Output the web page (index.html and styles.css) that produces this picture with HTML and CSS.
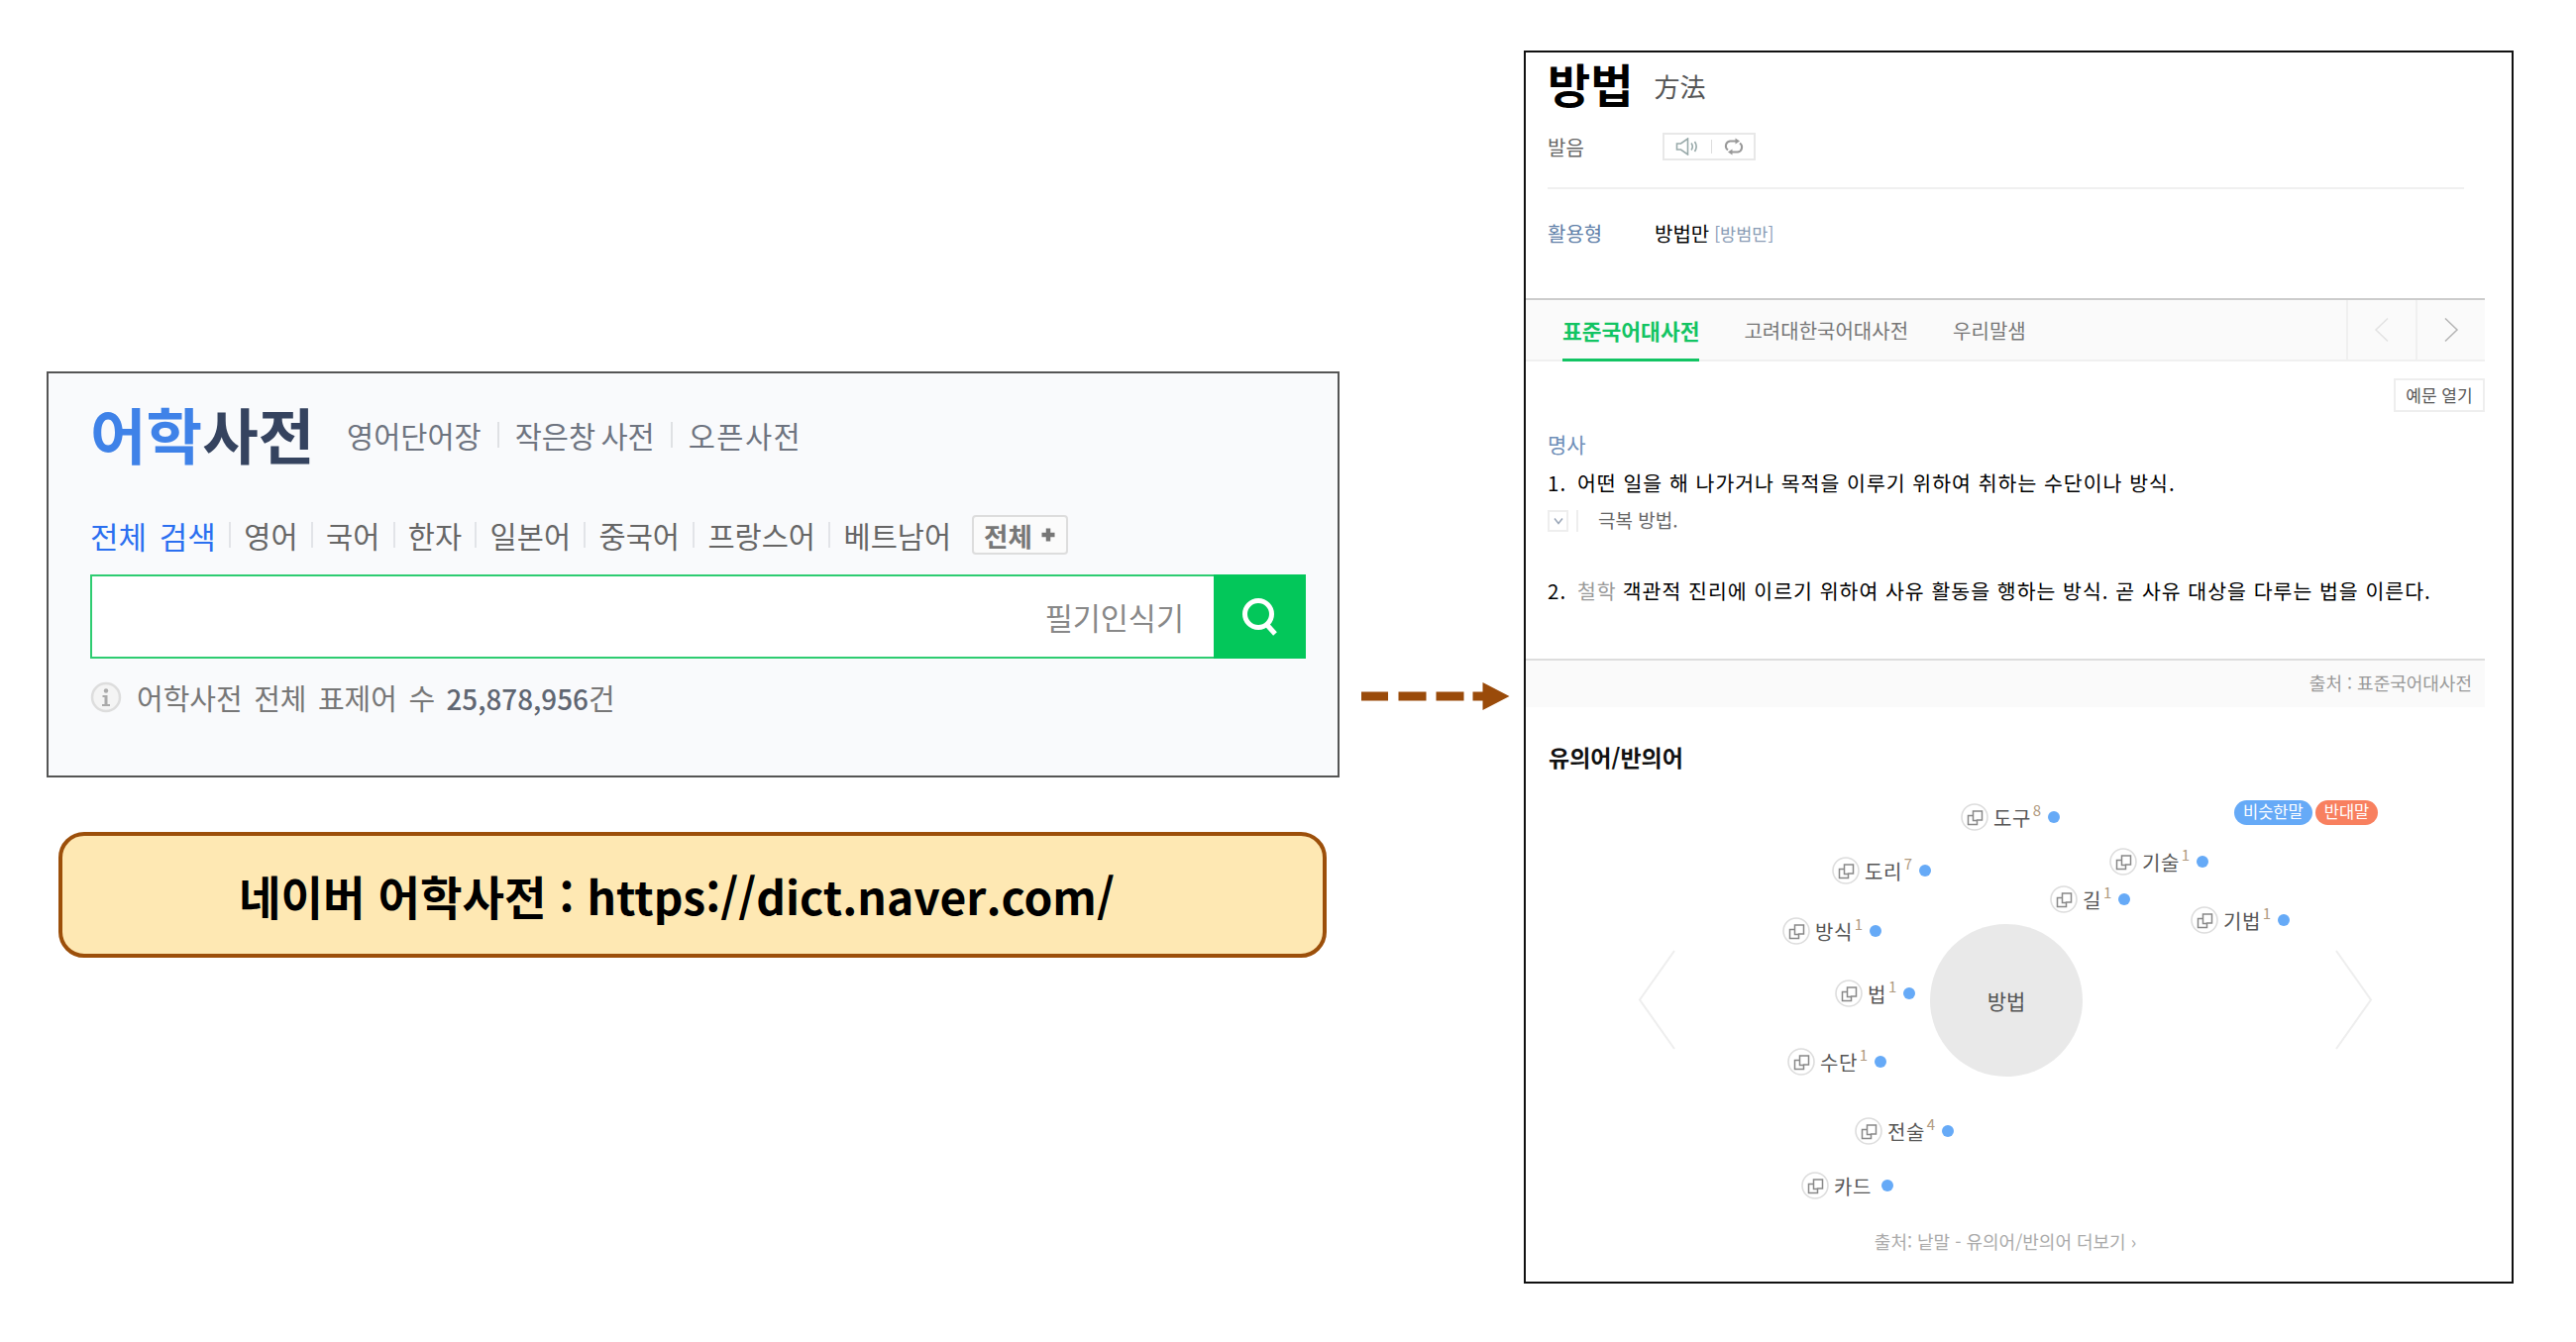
FILE: index.html
```html
<!DOCTYPE html>
<html lang="ko">
<head>
  <meta charset="UTF-8">
  <title>네이버 어학사전</title>
  <link rel="stylesheet" href="styles.css">
</head>
<body>
  <svg class="defs" width="0" height="0" aria-hidden="true">
    <symbol id="copy" viewBox="0 0 28 28">
      <circle cx="14" cy="14" r="13" fill="#fff" stroke="#ddd" stroke-width="1.6"/>
      <path d="M7.5 12.5h5v-4.500h9v9h-5v4.500h-9z M12.500 12.500v5h4" fill="none" stroke="#888" stroke-width="1.500"/>
    </symbol>
  </svg>

  <main class="slide">
    <section class="left">
      <div class="card">
        <div class="brand">
          <h1 class="logo"><span class="logo-blue">어학</span>사전</h1>
          <nav class="sublinks">
            <a>영어단어장</a><i></i><a>작은창 사전</a><i></i><a class="open">오픈사전</a>
          </nav>
        </div>
        <nav class="langs">
          <a class="on">전체 검색</a><i></i>
          <a>영어</a><i></i>
          <a>국어</a><i></i>
          <a>한자</a><i></i>
          <a>일본어</a><i></i>
          <a>중국어</a><i></i>
          <a>프랑스어</a><i></i>
          <a>베트남어</a>
          <button class="all-btn">전체
            <svg width="16" height="16" viewBox="0 0 16 16"><path d="M8 1.500v13M1.500 8h13" stroke="#777" stroke-width="4.500"/></svg>
          </button>
        </nav>
        <div class="search">
          <div class="search-input"><span>필기인식기</span></div>
          <div class="search-btn">
            <svg width="44" height="44" viewBox="0 0 44 44"><circle cx="20" cy="19" r="13.500" fill="none" stroke="#fff" stroke-width="5"/><path d="M28 29l9 10" stroke="#fff" stroke-width="5"/></svg>
          </div>
        </div>
        <p class="stat">
          <svg width="32" height="32" viewBox="0 0 32 32"><circle cx="16" cy="16" r="14" fill="#f4f4f4" stroke="#ddd" stroke-width="2.500"/><circle cx="16" cy="9.500" r="2.200" fill="#aaa"/><path d="M12.500 14h5v9h2.500v2h-8v-2h2.500v-7h-2z" fill="#aaa"/></svg>
          <span>어학사전 전체 표제어 수 <b>25,878,956</b>건</span>
        </p>
      </div>
      <div class="callout">네이버 어학사전 : https://dict.naver.com/</div>
    </section>

    <div class="arrow">
      <svg width="150" height="30" viewBox="0 0 150 30"><path d="M0 10.500h27v9h-27zM37.500 10.500h28v9h-28zM75.500 10.500h28v9h-28z" fill="#9a4b0a"/><path d="M112.500 10.500h10v-9.500l27 14-27 14v-9.500h-10z" fill="#9a4b0a"/></svg>
    </div>

    <section class="entry">
      <div class="pad">
        <div class="title-row">
          <h2 class="word">방법</h2>
          <span class="hanja">方法</span>
        </div>
        <div class="pron-row">
          <span class="pron-label">발음</span>
          <div class="pron-btns">
            <svg width="24" height="18" viewBox="0 0 24 18"><path d="M1.500 6h4l7-5v16l-7-5h-4z" fill="none" stroke="#9aa" stroke-width="1.600"/><path d="M16 5.500c1.500 2 1.500 5 0 7M19.500 4c2 3 2 7 0 10" fill="none" stroke="#9aa" stroke-width="1.600"/></svg>
            <i></i>
            <svg width="20" height="18" viewBox="0 0 20 18"><path d="M4 12.500a5 5 0 0 1 2-9h6M16 5.500a5 5 0 0 1-2 9h-6" fill="none" stroke="#999" stroke-width="2"/><path d="M11.500 0.500l4.500 3-4.500 3zM8.500 11.500l-4.500 3 4.500 3z" fill="#999"/></svg>
          </div>
        </div>
        <div class="divider"></div>
        <div class="conj-row">
          <span class="conj-label">활용형</span>
          <b class="conj-word">방법만</b>
          <span class="conj-pron">[방범만]</span>
        </div>
      </div>

      <div class="tabs">
        <a class="tab on">표준국어대사전</a>
        <a class="tab">고려대한국어대사전</a>
        <a class="tab">우리말샘</a>
        <div class="tab-nav">
          <span><svg width="16" height="26" viewBox="0 0 16 26"><path d="M14 1.500l-12 11.500 12 11.500" fill="none" stroke="#e2e2e2" stroke-width="1.500"/></svg></span>
          <span><svg width="16" height="26" viewBox="0 0 16 26"><path d="M2 1.500l12 11.500-12 11.500" fill="none" stroke="#b4b4b4" stroke-width="1.500"/></svg></span>
        </div>
      </div>

      <div class="sample-row"><button class="sample-btn">예문 열기</button></div>

      <div class="pad">
        <div class="pos">명사</div>
        <p class="sense first"><span class="num">1.</span>어떤 일을 해 나가거나 목적을 이루기 위하여 취하는 수단이나 방식.</p>
        <div class="example">
          <span class="ex-box"><svg width="10" height="8" viewBox="0 0 10 8"><path d="M1 1.500l4 5 4-5" fill="none" stroke="#9aa6b8" stroke-width="1.500"/></svg></span>
          <i></i>
          <span>극복 방법.</span>
        </div>
        <p class="sense second"><span class="num">2.</span><span class="field">철학</span>객관적 진리에 이르기 위하여 사유 활동을 행하는 방식. 곧 사유 대상을 다루는 법을 이른다.</p>
      </div>

      <div class="source">출처 : 표준국어대사전</div>

      <h3 class="syn-title">유의어/반의어</h3>

      <div class="graph">
        <svg class="chev chev-l" width="38" height="101" viewBox="0 0 38 101"><path d="M37 1l-35 49.500 35 49.500" fill="none" stroke="#eee" stroke-width="2"/></svg>
        <svg class="chev chev-r" width="38" height="101" viewBox="0 0 38 101"><path d="M1 1l35 49.500-35 49.500" fill="none" stroke="#eee" stroke-width="2"/></svg>
        <div class="hub">방법</div>
        <div class="pills"><span class="pill blue">비슷한말</span><span class="pill red">반대말</span></div>

        <a class="node n1"><svg width="28" height="28"><use href="#copy"/></svg>도구<sup>8</sup><em></em></a>
        <a class="node n2"><svg width="28" height="28"><use href="#copy"/></svg>도리<sup>7</sup><em></em></a>
        <a class="node n3"><svg width="28" height="28"><use href="#copy"/></svg>방식<sup>1</sup><em></em></a>
        <a class="node n4"><svg width="28" height="28"><use href="#copy"/></svg>법<sup>1</sup><em></em></a>
        <a class="node n5"><svg width="28" height="28"><use href="#copy"/></svg>수단<sup>1</sup><em></em></a>
        <a class="node n6"><svg width="28" height="28"><use href="#copy"/></svg>전술<sup>4</sup><em></em></a>
        <a class="node n7"><svg width="28" height="28"><use href="#copy"/></svg>카드<em class="wide"></em></a>
        <a class="node n8"><svg width="28" height="28"><use href="#copy"/></svg>길<sup>1</sup><em></em></a>
        <a class="node n9"><svg width="28" height="28"><use href="#copy"/></svg>기술<sup>1</sup><em></em></a>
        <a class="node n10"><svg width="28" height="28"><use href="#copy"/></svg>기법<sup>1</sup><em></em></a>
      </div>
      <div class="graph-foot">출처: 낱말 - 유의어/반의어 더보기 ›</div>
    </section>
  </main>
</body>
</html>
```

FILE: styles.css
```css
* {
  box-sizing: border-box;
}
html, body {
  margin: 0;
  padding: 0;
  background: #fff;
}
body {
  font-family: "Noto Sans CJK KR", "Noto Sans", sans-serif;
  color: #222;
  width: 2600px;
  height: 1355px;
  overflow: hidden;
}
a {
  text-decoration: none;
}
.defs {
  position: absolute;
}
.slide {
  display: flex;
  align-items: flex-start;
  padding: 51px 0 0 47px;
}

/* left column */
.left {
  width: 1305px;
  margin-top: 324px;
}
.card {
  height: 410px;
  background: #f9fafc;
  border: 2px solid #555;
  padding: 0 0 0 42px;
}
.brand {
  display: flex;
  align-items: center;
  height: 62px;
  margin-top: 30px;
}
.logo {
  margin: 0;
  font-size: 61.500px;
  line-height: 62px;
  font-weight: 700;
  color: #35435f;
  width: 259px;
  white-space: nowrap;
}
.logo-blue {
  color: #3f82e8;
}
.sublinks {
  display: flex;
  align-items: center;
  font-size: 29.5px;
  line-height: 40px;
  word-spacing: -3px;
  color: #6e7480;
  margin-top: 2px;
}
.sublinks i {
  width: 2px;
  height: 26px;
  background: #dfe1e4;
  margin: 0 16px;
}
.sublinks .open {
  letter-spacing: 1.500px;
}
.langs {
  display: flex;
  align-items: center;
  height: 44px;
  margin-top: 49px;
  font-size: 29.500px;
  color: #666;
}
.langs a.on {
  font-size: 31px;
  word-spacing: 4px;
  color: #2b6ff0;
}
.langs i {
  width: 2px;
  height: 26px;
  background: #e2e4e8;
  margin: 0 13.250px;
}
.all-btn {
  display: flex;
  align-items: center;
  gap: 8px;
  width: 97px;
  height: 40px;
  margin-left: 21px;
  padding: 0 0 0 10px;
  background: #fbfbfb;
  border: 2px solid #ddd;
  border-radius: 4px;
  font-family: inherit;
  font-size: 26.500px;
  font-weight: 700;
  color: #777;
}
.search {
  display: flex;
  width: 1227px;
  height: 85px;
  margin-top: 18px;
}
.search-input {
  flex: 1;
  display: flex;
  align-items: center;
  justify-content: flex-end;
  padding-right: 30px;
  background: #fff;
  border: 2px solid #2ecc71;
  border-right: none;
  font-size: 30.500px;
  color: #888;
}
.search-btn {
  display: flex;
  align-items: center;
  justify-content: center;
  width: 93px;
  background: #03c75a;
}
.stat {
  display: flex;
  align-items: center;
  gap: 15px;
  height: 40px;
  margin: 19px 0 0;
  font-size: 29px;
  word-spacing: 3.300px;
  color: #777;
}
.stat b {
  font-size: 27.800px;
  font-weight: 500;
  color: #5f6672;
}
.callout {
  display: flex;
  align-items: center;
  justify-content: center;
  width: 1280px;
  height: 127px;
  margin: 55px 0 0 12px;
  padding-right: 32px;
  background: #fee8b3;
  border: 4px solid #9c4f0a;
  border-radius: 26px;
  font-size: 46.200px;
  font-weight: 700;
  color: #000;
}

/* arrow between the two shots */
.arrow {
  width: 186px;
  height: 30px;
  margin-top: 637px;
  padding-left: 22px;
}

/* dictionary entry */
.entry {
  width: 999px;
  height: 1245px;
  border: 2px solid #111;
  padding: 2px 27px 0 0;
  background: #fff;
}
.pad {
  padding-left: 22px;
}
.title-row {
  display: flex;
  align-items: center;
  height: 58px;
}
.word {
  margin: 0;
  font-size: 47px;
  line-height: 58px;
  font-weight: 700;
  color: #000;
}
.hanja {
  margin: 4px 0 0 21px;
  font-size: 26px;
  color: #555;
}
.pron-row {
  display: flex;
  align-items: center;
  height: 28px;
  margin-top: 21px;
}
.pron-label {
  width: 116px;
  font-size: 20px;
  color: #666;
}
.pron-btns {
  display: flex;
  align-items: center;
  justify-content: center;
  gap: 12px;
  width: 94px;
  height: 28px;
  border: 2px solid #e8e8e8;
}
.pron-btns i {
  width: 1px;
  height: 14px;
  background: #ddd;
}
.divider {
  width: 925px;
  height: 2px;
  margin-top: 27px;
  background: #f0f0f0;
}
.conj-row {
  display: flex;
  align-items: center;
  height: 40px;
  margin-top: 24px;
}
.conj-label {
  width: 108px;
  font-size: 20px;
  color: #5f7fa8;
}
.conj-word {
  font-size: 20px;
  font-weight: 400;
  color: #000;
}
.conj-pron {
  margin-left: 5px;
  font-size: 17.500px;
  color: #8a9cb5;
}
.tabs {
  display: flex;
  align-items: center;
  height: 64px;
  margin-top: 46px;
  padding-left: 37px;
  background: #fafafa;
  border-top: 2px solid #ccc;
  border-bottom: 2px solid #f0f0f0;
}
.tab {
  display: flex;
  align-items: center;
  height: 62px;
  margin-right: 45px;
  font-size: 20px;
  color: #777;
}
.tab.on {
  font-size: 21.500px;
  font-weight: 700;
  color: #12c463;
  border-bottom: 3px solid #12c463;
  margin-bottom: -2px;
  padding-top: 1px;
}
.tab-nav {
  display: flex;
  height: 60px;
  margin-left: auto;
}
.tab-nav span {
  display: flex;
  align-items: center;
  justify-content: center;
  width: 70px;
  border-left: 2px solid #f0f0f0;
}
.sample-row {
  display: flex;
  justify-content: flex-end;
  margin-top: 17px;
}
.sample-btn {
  width: 92px;
  height: 34px;
  padding: 0 0 2px;
  background: #fff;
  border: 2px solid #eee;
  font-family: inherit;
  font-size: 17px;
  color: #555;
}
.pos {
  height: 26px;
  margin-top: 19px;
  font-size: 21px;
  line-height: 26px;
  color: #6f8fb8;
}
.sense {
  display: flex;
  height: 26px;
  margin: 13px 0 0;
  font-size: 20.500px;
  letter-spacing: 1px;
  line-height: 26px;
  color: #000;
  white-space: nowrap;
}
.sense.second {
  margin-top: 46px;
}
.num {
  width: 30px;
}
.field {
  margin-right: 6px;
  color: #999;
}
.example {
  display: flex;
  align-items: center;
  height: 22px;
  margin-top: 15px;
  font-size: 19px;
  line-height: 20px;
  color: #666;
}
.ex-box {
  display: flex;
  align-items: center;
  justify-content: center;
  width: 21px;
  height: 22px;
  border: 2px solid #eee;
}
.example i {
  width: 2px;
  height: 22px;
  margin: 0 20px 0 8px;
  background: #eee;
}
.example span:last-child {
  margin-top: -3px;
}
.source {
  height: 49px;
  margin-top: 56px;
  padding-right: 13px;
  background: #fafafa;
  border-top: 2px solid #ddd;
  font-size: 18px;
  line-height: 44px;
  color: #999;
  text-align: right;
}
.syn-title {
  height: 30px;
  margin: 35px 0 0 23px;
  font-size: 23px;
  line-height: 30px;
  font-weight: 700;
  color: #111;
}
.graph {
  position: relative;
  height: 452px;
  margin: 10px 0 0 2px;
}
.chev {
  position: absolute;
  top: 170px;
}
.chev-l {
  left: 111px;
}
.chev-r {
  left: 815px;
}
.hub {
  position: absolute;
  left: 406px;
  top: 144px;
  display: flex;
  align-items: center;
  justify-content: center;
  width: 154px;
  height: 154px;
  border-radius: 50%;
  background: #e9e9e9;
  font-size: 21px;
  color: #555;
}
.pills {
  position: absolute;
  left: 713px;
  top: 19px;
  display: flex;
  gap: 3px;
}
.pill {
  height: 25px;
  padding: 0 9px;
  border-radius: 13px;
  font-size: 16.500px;
  line-height: 23px;
  color: #fff;
  white-space: nowrap;
}
.pill.blue {
  background: #66aaf7;
}
.pill.red {
  background: #f8805f;
}
.node {
  position: absolute;
  display: flex;
  align-items: center;
  height: 28px;
  font-size: 20px;
  letter-spacing: 0.5px;
  color: #555;
  white-space: nowrap;
}
.node svg {
  margin-right: 5px;
}
.node sup {
  margin: -14px 0 0 2px;
  font-size: 15px;
  line-height: 14px;
  color: #b09a80;
}
.node em {
  width: 12px;
  height: 12px;
  margin-left: 6px;
  border-radius: 50%;
  background: #66aaf7;
}
.node em.wide {
  margin-left: 10px;
}
.n1 { left: 437px; top: 22px; }
.n2 { left: 307px; top: 76px; }
.n3 { left: 257px; top: 137px; }
.n4 { left: 310px; top: 200px; }
.n5 { left: 262px; top: 269px; }
.n6 { left: 330px; top: 339px; }
.n7 { left: 276px; top: 394px; }
.n8 { left: 527px; top: 105px; }
.n9 { left: 587px; top: 67px; }
.n10 { left: 669px; top: 126px; }
.graph-foot {
  height: 24px;
  font-size: 18px;
  line-height: 24px;
  color: #aaa;
  text-align: center;
}
```
